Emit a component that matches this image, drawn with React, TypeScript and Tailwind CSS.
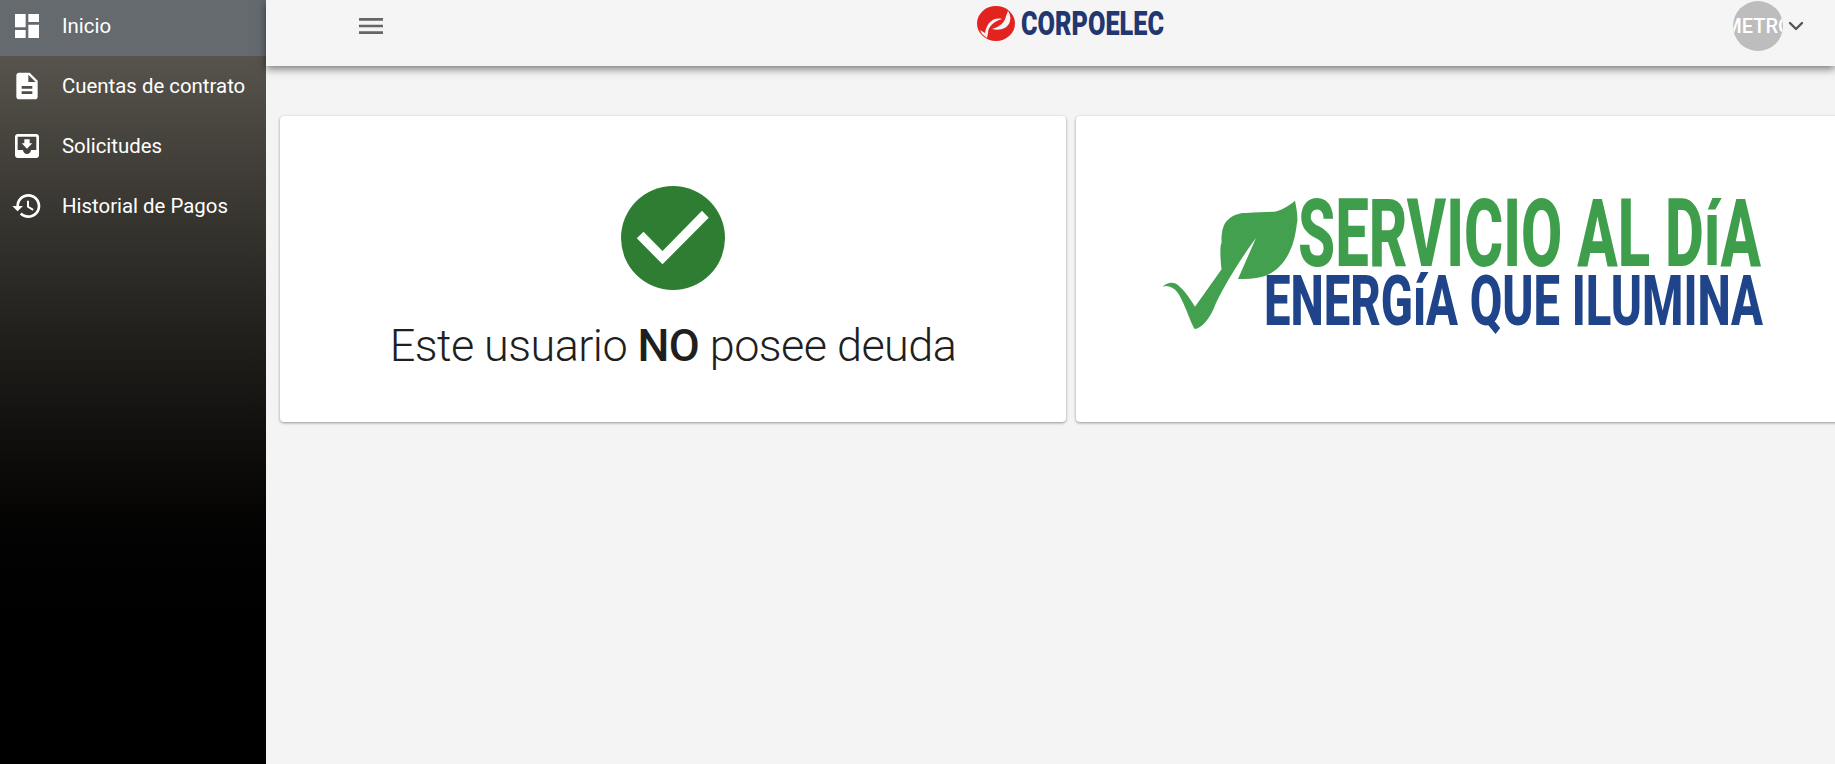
import { ChevronDown } from "lucide-react";

function NavIcon({ d }: { d: string }) {
  return (
    <svg viewBox="0 0 24 24" className="w-8 h-8 fill-white shrink-0">
      <path d={d} />
    </svg>
  );
}

const items = [
  { label: "Inicio", active: true, icon: "M3 13h8V3H3v10zm0 8h8v-6H3v6zm10 0h8V11h-8v10zm0-18v6h8V3h-8z" },
  { label: "Cuentas de contrato", active: false, icon: "M14 2H6c-1.1 0-1.99.9-1.99 2L4 20c0 1.1.89 2 1.99 2H18c1.1 0 2-.9 2-2V8l-6-6zm2 16H8v-2h8v2zm0-4H8v-2h8v2zm-3-5V3.5L18.5 9H13z" },
  { label: "Solicitudes", active: false, icon: "M19 3H4.99C3.88 3 3 3.9 3 5l.01 14c0 1.1.88 2 1.99 2h14c1.1 0 2-.9 2-2V5c0-1.1-.9-2-2-2zm0 12h-4c0 1.66-1.35 3-3 3s-3-1.34-3-3H4.99V5H19v10zm-3-5h-2V7h-4v3H8l4 4 4-4z" },
  { label: "Historial de Pagos", active: false, icon: "M13 3c-4.97 0-9 4.03-9 9H1l3.89 3.89.07.14L9 12H6c0-3.87 3.13-7 7-7s7 3.13 7 7-3.13 7-7 7c-1.93 0-3.68-.79-4.94-2.06l-1.42 1.42C8.27 19.99 10.51 21 13 21c4.97 0 9-4.03 9-9s-4.03-9-9-9zm-1 5v5l4.28 2.54.72-1.21-3.5-2.08V8H12z" },
];

function Sidebar() {
  return (
    <aside className="w-[266px] shrink-0 h-full bg-gradient-to-b from-[#635f57] to-black to-[88%]">
      {items.map((item) => (
        <div
          key={item.label}
          className={`flex items-center pl-[11px] gap-[19px] ${item.active ? "h-14 pb-1 bg-[#646a6e]" : "h-[60px]"}`}
        >
          <NavIcon d={item.icon} />
          <span className="text-white text-[20.4px]">{item.label}</span>
        </div>
      ))}
    </aside>
  );
}

function Header() {
  return (
    <header className="h-[66px] shrink-0 bg-[#f5f5f5] shadow-[0_3px_8px_rgba(0,0,0,0.5)] flex items-center justify-between pr-[27px] pl-[89px] pb-[14px]">
      <svg viewBox="0 0 24 24" className="w-8 h-8 fill-[#666]">
        <path d="M3 18h18v-2H3v2zm0-5h18v-2H3v2zm0-7v2h18V6H3z" />
      </svg>
      {/* logo */}
      <svg viewBox="0 0 187 36" className="w-[187px] h-9 ml-[21px] -mt-1">
        <ellipse cx="19" cy="17.5" rx="19" ry="17.5" fill="#e2231f" />
        <path d="M25 13C18 11 10 15 8 27L3 24L5 28L10 32L11 27C11 21 17 15 25 13Z" fill="#f5f5f5" />
        <path d="M31 5L29 10C28 16 23 21 15 23C22 25 31 23 33 15C34 11 33 8 31 5Z" fill="#f5f5f5" />
        <text x="44" y="29" fontSize="33" fontWeight="900" fill="#22376f" textLength="143" lengthAdjust="spacingAndGlyphs">CORPOELEC</text>
      </svg>
      <div className="flex items-center gap-[1px]">
        <div className="w-[50px] h-[50px] rounded-full bg-[#bdbdbd] overflow-hidden flex items-center justify-center">
          <span className="text-white text-[20px] font-medium shrink-0">METRO</span>
        </div>
        <ChevronDown className="w-6 h-6 text-[#555]" strokeWidth={2.4} />
      </div>
    </header>
  );
}

function DebtCard() {
  return (
    <section className="w-[786px] shrink-0 bg-white rounded-[4px] shadow-[0_1px_3px_rgba(0,0,0,0.4)] h-[306px] flex flex-col items-center pt-[70px]">
      <svg viewBox="0 0 104 104" className="w-[104px] h-[104px]">
        <circle cx="52" cy="52" r="52" fill="#2e7d32" />
        <polygon points="15.8,52.3 22.5,45.7 41.5,65 81,24.7 87.7,31.7 41.5,78.3" fill="#fff" />
      </svg>
      <p className="mt-[30px] text-[45px] tracking-[-0.55px] font-[350] leading-[52px] text-[#1f1f1f]">
        Este usuario <b className="font-medium">NO</b> posee deuda
      </p>
    </section>
  );
}

function PromoCard() {
  return (
    <section className="w-[786px] shrink-0 bg-white rounded-[4px] shadow-[0_1px_3px_rgba(0,0,0,0.4)] h-[306px] pl-[84px] pt-[82px]">
      {/* banner */}
      <svg viewBox="0 0 606 136" className="w-[606px] h-[136px]">
        <path
          d="M2.4 88.7C8 84 14 83 19 88C26 94 32 104 35 108.7L61.6 71.3C60 60 60 46 61.6 45.3C61 35 63 26 67.8 22C74 15 84 15 86 15C98 14.5 108 14 114.7 13.7C122 12 130 7 135 2.7C137 12 138 22 137 25C135 40 133 48 127 58.7C120 70 112 76 102.4 78.7C94 81 86 81 78 81L96 40C84 56 66 84 56 105C50 122 40 131 35 131C32 129 26 108 18 95C13 89 8 87 2.4 88.7Z"
          fill="#43a04f"
        />
        <text x="138" y="68" fontSize="94" fontWeight="800" fill="#3f9e4c" textLength="463" lengthAdjust="spacingAndGlyphs">SERVICIO AL DíA</text>
        <text x="104" y="127" fontSize="70" fontWeight="800" fill="#1f4489" textLength="499" lengthAdjust="spacingAndGlyphs">ENERGíA QUE ILUMINA</text>
      </svg>
    </section>
  );
}

export default function App() {
  return (
    <div className="flex h-[764px] overflow-hidden bg-[#f4f4f4] font-['Roboto',sans-serif]">
      <Sidebar />
      <main className="flex-1 min-w-0 flex flex-col">
        <Header />
        <div className="flex gap-[10px] pl-[14px] pt-[50px]">
          <DebtCard />
          <PromoCard />
        </div>
      </main>
    </div>
  );
}
